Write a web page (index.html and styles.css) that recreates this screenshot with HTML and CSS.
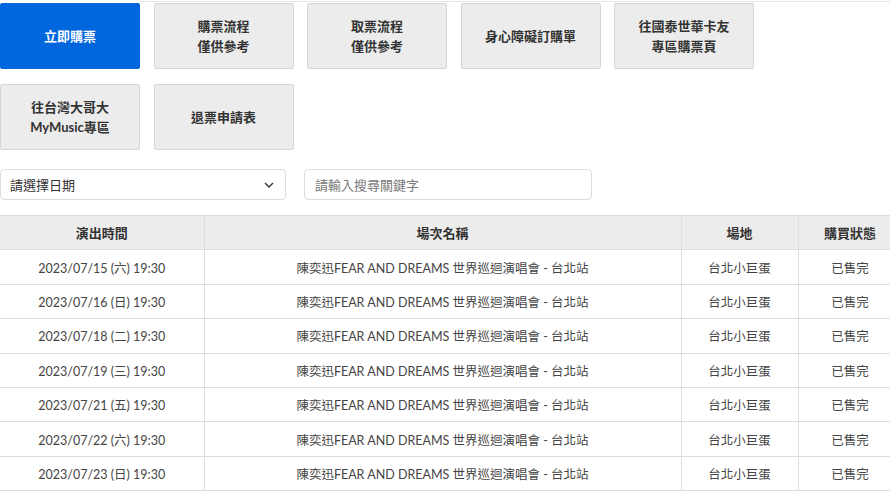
FILE: index.html
```html
<!DOCTYPE html>
<html lang="zh-Hant">
<head>
    <meta charset="UTF-8">
    <meta name="viewport" content="width=device-width, initial-scale=1.0">
    <title>購票</title>
    <link rel="stylesheet" href="styles.css">
</head>
<body>
    <div class="container">
        <div class="top-rule"></div>

        <div class="btn-group">
            <a class="btn btn-primary" href="#">立即購票</a>
            <a class="btn" href="#">購票流程<br>僅供參考</a>
            <a class="btn" href="#">取票流程<br>僅供參考</a>
            <a class="btn" href="#">身心障礙訂購單</a>
            <a class="btn" href="#">往國泰世華卡友<br>專區購票頁</a>
            <a class="btn" href="#">往台灣大哥大<br>MyMusic專區</a>
            <a class="btn" href="#">退票申請表</a>
        </div>

        <div class="filters">
            <div class="select-box">
                <span>請選擇日期</span>
                <svg width="10" height="6" viewBox="0 0 10 6"><path d="M1 1l4 4 4-4" fill="none" stroke="#333" stroke-width="1.4"/></svg>
            </div>
            <input type="text" class="search" placeholder="請輸入搜尋關鍵字">
        </div>

        <table class="game-table">
            <thead>
                <tr>
                    <th class="col-time">演出時間</th>
                    <th class="col-name">場次名稱</th>
                    <th class="col-place">場地</th>
                    <th class="col-status">購買狀態</th>
                </tr>
            </thead>
            <tbody>
                <tr><td>2023/07/15 (六) 19:30</td><td>陳奕迅FEAR AND DREAMS 世界巡迴演唱會 - 台北站</td><td>台北小巨蛋</td><td>已售完</td></tr>
                <tr><td>2023/07/16 (日) 19:30</td><td>陳奕迅FEAR AND DREAMS 世界巡迴演唱會 - 台北站</td><td>台北小巨蛋</td><td>已售完</td></tr>
                <tr><td>2023/07/18 (二) 19:30</td><td>陳奕迅FEAR AND DREAMS 世界巡迴演唱會 - 台北站</td><td>台北小巨蛋</td><td>已售完</td></tr>
                <tr><td>2023/07/19 (三) 19:30</td><td>陳奕迅FEAR AND DREAMS 世界巡迴演唱會 - 台北站</td><td>台北小巨蛋</td><td>已售完</td></tr>
                <tr><td>2023/07/21 (五) 19:30</td><td>陳奕迅FEAR AND DREAMS 世界巡迴演唱會 - 台北站</td><td>台北小巨蛋</td><td>已售完</td></tr>
                <tr><td>2023/07/22 (六) 19:30</td><td>陳奕迅FEAR AND DREAMS 世界巡迴演唱會 - 台北站</td><td>台北小巨蛋</td><td>已售完</td></tr>
                <tr><td>2023/07/23 (日) 19:30</td><td>陳奕迅FEAR AND DREAMS 世界巡迴演唱會 - 台北站</td><td>台北小巨蛋</td><td>已售完</td></tr>
            </tbody>
        </table>
    </div>
</body>
</html>
```

FILE: styles.css
```css
* {
    margin: 0;
    padding: 0;
    box-sizing: border-box;
    font-family: Lato, "Noto Sans CJK TC", sans-serif;
}

body {
    background: #fff;
    overflow: hidden;
    color: #333;
}

.container {
    width: 910px;
}

.top-rule {
    margin: 1px 0 0 140px;
    border-top: 1px solid #e6e6e6;
}

/* buttons */
.btn-group {
    display: flex;
    flex-wrap: wrap;
    gap: 15px 13.5px;
    width: 770px;
    margin-top: 1px;
}

.btn {
    width: 140px;
    height: 66px;
    display: flex;
    align-items: center;
    justify-content: center;
    text-align: center;
    background: #ececec;
    border: 1px solid #d6d6d6;
    border-radius: 2px;
    color: #333;
    font-size: 13px;
    font-weight: 700;
    line-height: 20px;
    text-decoration: none;
}

.btn-primary {
    background: #0066dd;
    border-color: #0066dd;
    color: #fff;
}

/* filters */
.filters {
    display: flex;
    gap: 18px;
    margin-top: 19px;
}

.select-box {
    width: 286px;
    height: 31px;
    border: 1px solid #dcdcdc;
    border-radius: 4px;
    display: flex;
    align-items: center;
    justify-content: space-between;
    padding: 0 11px 0 9px;
    font-size: 13px;
    color: #333;
}

.search {
    width: 288px;
    height: 31px;
    border: 1px solid #dcdcdc;
    border-radius: 4px;
    padding: 0 10px;
    font-size: 13px;
    color: #333;
}

.search::placeholder {
    color: #777;
}

/* table */
.game-table {
    margin-top: 15px;
    width: 902px;
    border-collapse: collapse;
    font-size: 13px;
    table-layout: fixed;
}

.game-table th,
.game-table td {
    height: 34.4px;
    text-align: center;
    border: 1px solid #dedede;
    border-left: none;
    padding: 0 4px;
    white-space: nowrap;
}

.game-table th + th,
.game-table td + td {
    border-left: 1px solid #dedede;
}

.game-table th {
    background: #ececec;
    font-weight: 700;
    color: #333;
}

.game-table td {
    color: #444;
    font-size: 12.5px;
}

.col-time { width: 204px; }
.col-name { width: 477px; }
.col-place { width: 117px; }
.col-status { width: 104px; }
```
